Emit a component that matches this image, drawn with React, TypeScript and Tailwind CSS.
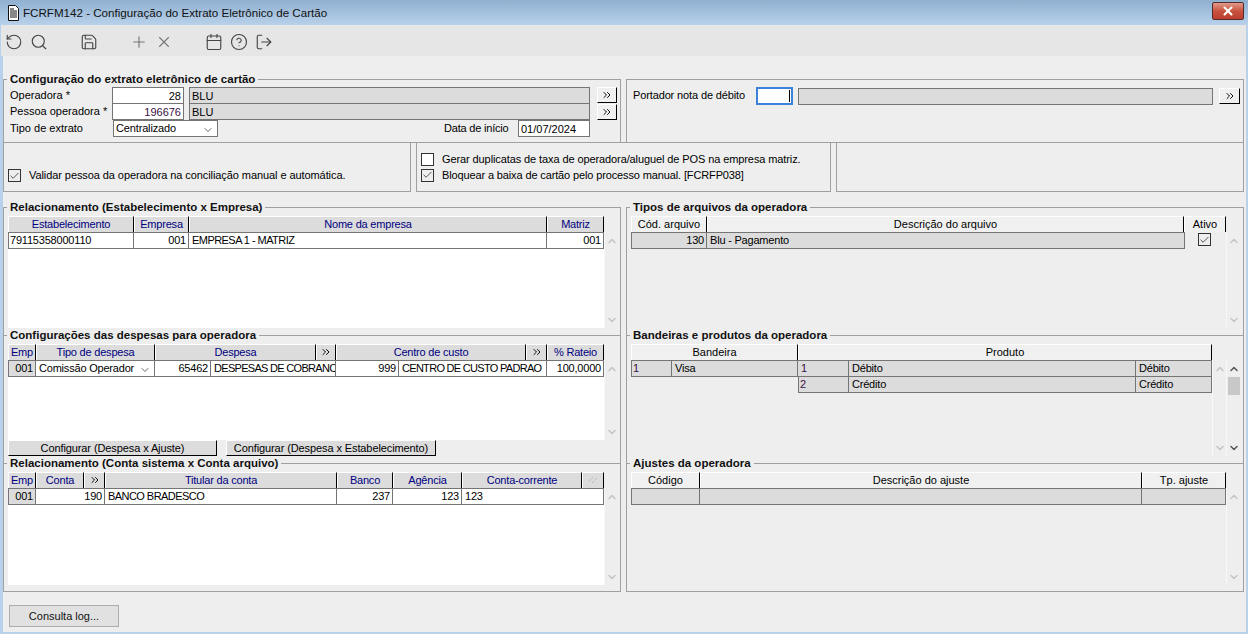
import type { ReactNode } from "react";
import { Calendar, Check, ChevronDown, ChevronUp, ChevronsRight, CircleHelp, LogOut, Plus, RotateCcw, Save, Search, X } from "lucide-react";

const LINE = "border-[#a0a0a0]";
const FONT = "[font-family:'Liberation_Sans',Arial,sans-serif]";

type Head = { w: number; label?: ReactNode };
type Cell = { w: number; text?: ReactNode; right?: boolean; tone?: "white" | "grey"; blank?: boolean; purple?: boolean; caps?: boolean };

const Arrows = () => <ChevronsRight size={12} strokeWidth={1.9} className="text-black" />;

const ArrowButton = ({ w = 20 }: { w?: number }) => (
  <button style={{ width: w }} className="h-[16px] flex items-center justify-center bg-[#f0f0f0] border-t border-l border-t-white border-l-white border-r border-b border-r-black border-b-black shrink-0">
    <Arrows />
  </button>
);

const Box = ({ checked }: { checked?: boolean }) => (
  <span className={`w-[13px] h-[13px] border border-[#333] flex items-center justify-center shrink-0 ${checked ? "bg-[#eeeeee]" : "bg-white"}`}>
    {checked && <Check size={12} strokeWidth={2} className="text-[#444]" />}
  </span>
);

const TextField = ({ w, text, right, grey, purple }: { w: number; text: string; right?: boolean; grey?: boolean; purple?: boolean }) => (
  <div style={{ width: w }} className={`h-[17px] leading-[16px] px-[2px] border border-[#757575] shrink-0 ${grey ? "bg-[#dcdcdc]" : "bg-white"} ${right ? "text-right" : ""} ${purple ? "text-[#3a1045]" : ""}`}>
    {text}
  </div>
);

const Legend = ({ title }: { title: string }) => (
  <legend className="ml-[3px] px-[3px] h-[14px] leading-[14px] text-[11.5px] font-bold text-[#111]">{title}</legend>
);

const Divider = ({ title }: { title: string }) => (
  <div className="flex items-center h-[14px]">
    <span className={`w-[3px] border-t ${LINE}`} />
    <span className="px-[3px] leading-[14px] text-[11.5px] font-bold text-[#111]">{title}</span>
    <span className={`flex-1 border-t ${LINE}`} />
  </div>
);

const HeaderRow = ({ cols, light }: { cols: Head[]; light?: boolean }) => (
  <div className="flex h-[16px] shrink-0">
    {cols.map((c, i) => (
      <div
        key={i}
        style={{ width: c.w }}
        className={`flex items-center justify-center pb-px leading-[14px] border-t border-l border-t-white border-l-white border-r border-r-black shrink-0 ${light ? "bg-[#f0f0f0] text-black" : "bg-[#dcdcdc] text-[#000080] tracking-[-0.2px]"}`}
      >
        {c.label}
      </div>
    ))}
  </div>
);

const DataRow = ({ cells, first }: { cells: Cell[]; first?: boolean }) => (
  <div className={`flex h-[17px] shrink-0 ${first ? "" : "-mt-px"}`}>
    {cells.map((c, i) => {
      const edge = i === 0 || cells[i - 1].blank;
      return c.blank ? (
        <div key={i} style={{ width: c.w }} className="shrink-0" />
      ) : (
        <div
          key={i}
          style={{ width: c.w }}
          className={`leading-[15px] pr-[2px] overflow-hidden whitespace-nowrap border-y border-r border-[#757575] shrink-0 ${edge ? "border-l pl-[1px]" : "pl-[3px]"} ${c.tone === "grey" ? "bg-[#dcdcdc]" : "bg-white"} ${c.right ? "text-right" : ""} ${c.purple ? "text-[#3a1045]" : ""} ${c.caps ? "tracking-[-0.55px]" : "tracking-[-0.2px]"}`}
        >
          {c.text}
        </div>
      );
    })}
  </div>
);

const ScrollCol = ({ active, thumb }: { active?: boolean; thumb?: boolean }) => (
  <div className={`w-[14px] shrink-0 mt-[16px] border-l border-l-[#f8f8f8] flex flex-col items-center ${active ? "text-[#555]" : "text-[#c4c4c4]"}`}>
    <ChevronUp size={12} strokeWidth={3} className="mt-[3px]" />
    {thumb && <div className="w-[12px] h-[18px] bg-[#c8c8c8] mt-[2px]" />}
    <ChevronDown size={12} strokeWidth={3} className="mt-auto mb-[2px]" />
  </div>
);

const Panel = ({ title, width, children }: { title: string; width: number; children: ReactNode }) => (
  <fieldset style={{ width }} className={`border ${LINE} shrink-0 h-[392px] flex flex-col`}>
    <Legend title={title} />
    {children}
  </fieldset>
);

const Relacionamento = () => (
  <div className="flex h-[114px] pl-[4px] pt-[2px]">
    <div className="w-[596px] flex flex-col">
      <HeaderRow
        cols={[
          { w: 126, label: "Estabelecimento" },
          { w: 55, label: "Empresa" },
          { w: 358, label: "Nome da empresa" },
          { w: 57, label: "Matriz" },
        ]}
      />
      <div className="flex-1 bg-white">
        <DataRow
          first
          cells={[
            { w: 126, text: "79115358000110" },
            { w: 55, text: "001", right: true },
            { w: 358, text: "EMPRESA 1 - MATRIZ", caps: true },
            { w: 57, text: "001", right: true },
          ]}
        />
      </div>
    </div>
    <ScrollCol />
  </div>
);

const Despesas = () => (
  <div className="flex flex-col h-[114px] pl-[4px] pt-[2px]">
    <div className="flex flex-1 min-h-0">
      <div className="w-[596px] flex flex-col">
        <HeaderRow
          cols={[
            { w: 28, label: "Emp" },
            { w: 119, label: "Tipo de despesa" },
            { w: 161, label: "Despesa" },
            { w: 20, label: <Arrows /> },
            { w: 190, label: "Centro de custo" },
            { w: 21, label: <Arrows /> },
            { w: 57, label: "% Rateio" },
          ]}
        />
        <div className="flex-1 bg-white">
          <DataRow
            first
            cells={[
              { w: 28, text: "001", right: true, tone: "grey" },
              {
                w: 119,
                text: (
                  <span className="flex items-center justify-between pr-[1px]">
                    Comissão Operador <ChevronDown size={12} strokeWidth={1.5} className="text-[#333] mt-[2px]" />
                  </span>
                ),
              },
              { w: 56, text: "65462", right: true },
              { w: 125, text: <span className="tracking-[-0.7px]">DESPESAS DE COBRANC</span>, caps: true },
              { w: 63, text: "999", right: true },
              { w: 148, text: <span className="tracking-[-0.7px]">CENTRO DE CUSTO PADRAO</span>, caps: true },
              { w: 57, text: "100,0000", right: true },
            ]}
          />
        </div>
      </div>
      <ScrollCol />
    </div>
    <div className="flex gap-[9px] h-[16px] shrink-0">
      <button className="w-[209px] bg-[#dcdcdc] border-t border-l border-t-white border-l-white border-r border-b border-r-black border-b-black leading-[14px] tracking-[-0.1px]">Configurar (Despesa x Ajuste)</button>
      <button className="w-[210px] bg-[#dcdcdc] border-t border-l border-t-white border-l-white border-r border-b border-r-black border-b-black leading-[14px] tracking-[-0.1px]">Configurar (Despesa x Estabelecimento)</button>
    </div>
  </div>
);

const Contas = () => (
  <div className="flex flex-1 min-h-0 pl-[4px] pt-[2px] pb-[6px]">
    <div className="w-[596px] flex flex-col">
      <HeaderRow
        cols={[
          { w: 28, label: "Emp" },
          { w: 48, label: "Conta" },
          { w: 21, label: <Arrows /> },
          { w: 232, label: "Titular da conta" },
          { w: 56, label: "Banco" },
          { w: 69, label: "Agência" },
          { w: 120, label: "Conta-corrente" },
          {
            w: 22,
            label: (
              <svg width="10" height="8" viewBox="0 0 10 8" className="text-[#aaa]">
                <path d="M1 5L5 1M4 7L9 2" stroke="currentColor" strokeDasharray="1 1" />
              </svg>
            ),
          },
        ]}
      />
      <div className="flex-1 bg-white">
        <DataRow
          first
          cells={[
            { w: 28, text: "001", right: true, tone: "grey" },
            { w: 69, text: "190", right: true },
            { w: 232, text: "BANCO BRADESCO", caps: true },
            { w: 56, text: "237", right: true },
            { w: 69, text: "123", right: true },
            { w: 142, text: "123" },
          ]}
        />
      </div>
    </div>
    <ScrollCol />
  </div>
);

const TiposArquivo = () => (
  <div className="flex h-[114px] pl-[4px] pt-[2px]">
    <div className="w-[595px] flex flex-col">
      <HeaderRow
        light
        cols={[
          { w: 76, label: "Cód. arquivo" },
          { w: 477, label: "Descrição do arquivo" },
          { w: 42, label: "Ativo" },
        ]}
      />
      <div className="flex">
        <DataRow
          first
          cells={[
            { w: 76, text: "130", right: true, tone: "grey" },
            { w: 478, text: "Blu - Pagamento", tone: "grey" },
          ]}
        />
        <div className="flex-1 flex justify-center pt-px pr-[2px]">
          <Box checked />
        </div>
      </div>
    </div>
    <ScrollCol />
  </div>
);

const Bandeiras = () => (
  <div className="flex h-[114px] pl-[4px] pt-[2px]">
    <div className="w-[581px] flex flex-col">
      <HeaderRow
        light
        cols={[
          { w: 167, label: "Bandeira" },
          { w: 414, label: "Produto" },
        ]}
      />
      <DataRow
        first
        cells={[
          { w: 41, text: "1", tone: "grey", purple: true },
          { w: 126, text: "Visa", tone: "grey" },
          { w: 51, text: "1", tone: "grey", purple: true },
          { w: 287, text: "Débito", tone: "grey" },
          { w: 76, text: "Débito", tone: "grey" },
        ]}
      />
      <DataRow
        cells={[
          { w: 167, blank: true },
          { w: 51, text: "2", tone: "grey", purple: true },
          { w: 287, text: "Crédito", tone: "grey" },
          { w: 76, text: "Crédito", tone: "grey" },
        ]}
      />
    </div>
    <ScrollCol />
    <ScrollCol active thumb />
  </div>
);

const Ajustes = () => (
  <div className="flex flex-1 min-h-0 pl-[4px] pt-[2px] pb-[6px]">
    <div className="w-[595px] flex flex-col">
      <HeaderRow
        light
        cols={[
          { w: 69, label: "Código" },
          { w: 442, label: "Descrição do ajuste" },
          { w: 84, label: "Tp. ajuste" },
        ]}
      />
      <DataRow
        first
        cells={[
          { w: 69, tone: "grey" },
          { w: 442, tone: "grey" },
          { w: 84, tone: "grey" },
        ]}
      />
    </div>
    <ScrollCol />
  </div>
);

const App = () => {
  return (
    <div className={`w-[1248px] h-[634px] overflow-hidden bg-[#b9d1ea] flex flex-col text-[11px] text-black ${FONT}`}>
      {/* barra de titulo */}
      <div className="h-[25px] shrink-0 flex items-center bg-gradient-to-b from-[#8fb0d0] to-[#b9d1ea] pl-[6px] pr-[4px]">
        <svg width="14" height="16" viewBox="0 0 14 16" className="shrink-0">
          <path d="M2.5 0.5H9.5L12.5 3.5V15.5H2.5Z" fill="#fff" stroke="#111" />
          <path d="M4 4H8M4 6H11M4 8H11M4 10H11M4 12H11" stroke="#111" />
        </svg>
        <span className="ml-[3px] text-[11.6px] text-[#111]">FCRFM142 - Configuração do Extrato Eletrônico de Cartão</span>
        <button className="ml-auto mb-[4px] w-[32px] h-[18px] rounded-[2px] border border-[#5a2a2a] flex items-center justify-center bg-gradient-to-b from-[#e09a8a] via-[#c9523e] to-[#b8402c]">
          <X size={14} strokeWidth={3.6} className="text-white" />
        </button>
      </div>

      <div className="ml-[3px] mr-[2px] h-[607px] shrink-0 bg-[#eeeeee] flex flex-col">
        {/* toolbar */}
        <div className="h-[31px] shrink-0 bg-[#e6e6e6] flex items-center pt-[2px] -ml-[2px] text-[#444]">
          <span className="w-[25px] flex justify-center"><RotateCcw size={18} strokeWidth={1.5} /></span>
          <span className="w-[25px] flex justify-center"><Search size={18} strokeWidth={1.5} /></span>
          <span className="w-[25px]" />
          <span className="w-[25px] flex justify-center"><Save size={18} strokeWidth={1.5} /></span>
          <span className="w-[25px]" />
          <span className="w-[25px] flex justify-center text-[#777]"><Plus size={18} strokeWidth={1.5} /></span>
          <span className="w-[25px] flex justify-center text-[#777]"><X size={18} strokeWidth={1.5} /></span>
          <span className="w-[25px]" />
          <span className="w-[25px] flex justify-center"><Calendar size={18} strokeWidth={1.5} /></span>
          <span className="w-[25px] flex justify-center"><CircleHelp size={18} strokeWidth={1.5} /></span>
          <span className="w-[25px] flex justify-center"><LogOut size={18} strokeWidth={1.5} /></span>
        </div>

        {/* configuracao */}
        <div className="flex gap-[5px] mt-[16px] h-[71px] shrink-0">
          <fieldset className={`w-[618px] border ${LINE} shrink-0`}>
            <Legend title="Configuração do extrato eletrônico de cartão" />
            <div className="flex flex-col pl-[6px] pt-px">
              <div className="flex items-center h-[16px]">
                <span className="w-[102px]">Operadora *</span>
                <TextField w={72} text="28" right />
                <span className="w-[5px]" />
                <TextField w={401} text="BLU" grey />
                <span className="w-[7px]" />
                <ArrowButton />
              </div>
              <div className="flex items-center h-[17px]">
                <span className="w-[102px]">Pessoa operadora *</span>
                <TextField w={72} text="196676" right purple />
                <span className="w-[5px]" />
                <TextField w={401} text="BLU" grey />
                <span className="w-[7px]" />
                <ArrowButton />
              </div>
              <div className="flex items-center h-[17px]">
                <span className="w-[103px]">Tipo de extrato</span>
                <div className="w-[105px] h-[17px] leading-[15px] pl-[2px] pr-[3px] border border-[#757575] bg-white flex items-center justify-between tracking-[-0.15px]">
                  Centralizado
                  <ChevronDown size={12} strokeWidth={1.5} className="text-[#333] mt-[2px]" />
                </div>
                <span className="ml-[226px] w-[74px] tracking-[-0.2px]">Data de início</span>
                <TextField w={72} text="01/07/2024" />
              </div>
            </div>
          </fieldset>
          <fieldset className={`w-[618px] border ${LINE} shrink-0 mt-[7px] h-[64px]`}>
            <div className="flex items-center h-[18px] mt-[7px] pl-[6px]">
              <span className="w-[123px] pb-[2px] tracking-[-0.13px]">Portador nota de débito</span>
              <div className="w-[37px] h-[18px] border-2 border-[#3c82d8] bg-white shrink-0 flex items-center justify-end pr-[1px]">
                <span className="w-px h-[12px] bg-black" />
              </div>
              <span className="w-[5px]" />
              <TextField w={415} text="" grey />
              <span className="w-[6px]" />
              <ArrowButton w={21} />
            </div>
          </fieldset>
        </div>

        {/* opcoes */}
        <div className="flex h-[50px] gap-[5px] shrink-0 -mt-px">
          <div className={`w-[408px] border ${LINE} flex items-center gap-[8px] pl-[4px] pt-[17px] tracking-[-0.08px]`}>
            <Box checked />
            <span>Validar pessoa da operadora na conciliação manual e automática.</span>
          </div>
          <div className={`w-[415px] border ${LINE} flex flex-col pl-[4px] pt-[8px]`}>
            <div className="flex items-center gap-[8px] h-[16px] tracking-[-0.1px]">
              <Box />
              <span>Gerar duplicatas de taxa de operadora/aluguel de POS na empresa matriz.</span>
            </div>
            <div className="flex items-center gap-[8px] h-[16px] tracking-[-0.13px]">
              <Box checked />
              <span>Bloquear a baixa de cartão pelo processo manual. [FCRFP038]</span>
            </div>
          </div>
          <div className={`w-[408px] border ${LINE}`} />
        </div>

        {/* paineis */}
        <div className="flex gap-[5px] mt-[8px] shrink-0">
          <Panel title="Relacionamento (Estabelecimento x Empresa)" width={618}>
            <Relacionamento />
            <Divider title="Configurações das despesas para operadora" />
            <Despesas />
            <Divider title="Relacionamento (Conta sistema x Conta arquivo)" />
            <Contas />
          </Panel>
          <Panel title="Tipos de arquivos da operadora" width={618}>
            <TiposArquivo />
            <Divider title="Bandeiras e produtos da operadora" />
            <Bandeiras />
            <Divider title="Ajustes da operadora" />
            <Ajustes />
          </Panel>
        </div>

        <div className="mt-[13px] ml-[6px]">
          <button className="w-[110px] h-[22px] bg-[#e1e1e1] border border-[#adadad] text-[#111]">Consulta log...</button>
        </div>
      </div>
    </div>
  );
};

export default App;
